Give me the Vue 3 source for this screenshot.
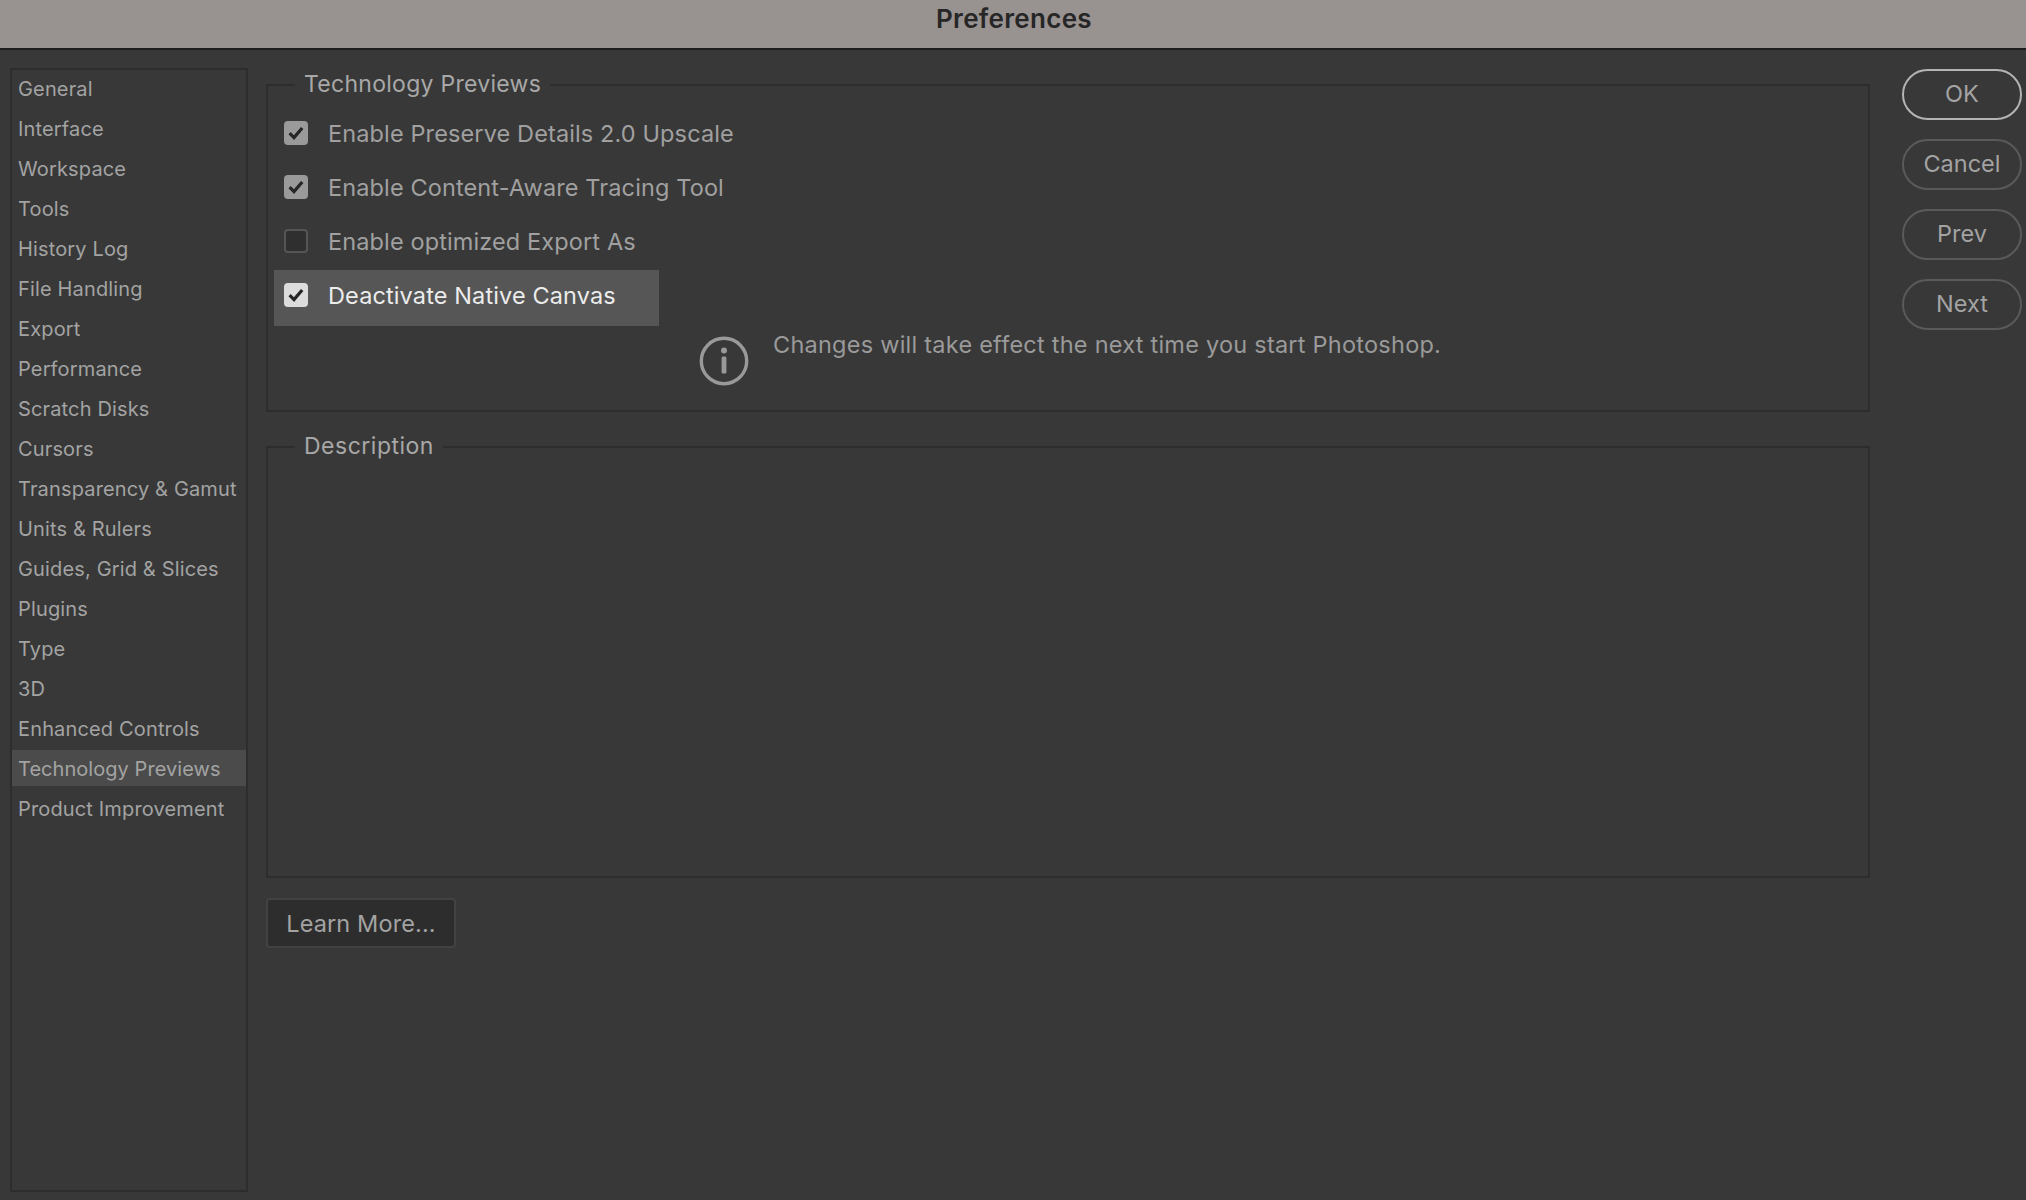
<script setup>
import { ref } from 'vue';

// 左侧分类列表
const sections = [
  'General', 'Interface', 'Workspace', 'Tools', 'History Log', 'File Handling',
  'Export', 'Performance', 'Scratch Disks', 'Cursors', 'Transparency & Gamut',
  'Units & Rulers', 'Guides, Grid & Slices', 'Plugins', 'Type', '3D',
  'Enhanced Controls', 'Technology Previews', 'Product Improvement'
];
const activeSection = ref('Technology Previews');

const previews = ref([
  { id: 1, label: 'Enable Preserve Details 2.0 Upscale', checked: true, hot: false },
  { id: 2, label: 'Enable Content-Aware Tracing Tool', checked: true, hot: false },
  { id: 3, label: 'Enable optimized Export As', checked: false, hot: false },
  { id: 4, label: 'Deactivate Native Canvas', checked: true, hot: true }
]);

const actions = ['OK', 'Cancel', 'Prev', 'Next'];
</script>

<template>
  <div class="dialog">
    <header class="titlebar">Preferences</header>
    <div class="body">
      <nav class="sidebar">
        <div
          v-for="s in sections"
          :key="s"
          class="nav-item"
          :class="{ active: s === activeSection }"
          @click="activeSection = s"
        >{{ s }}</div>
      </nav>

      <main class="content">
        <fieldset class="group previews">
          <legend>Technology Previews</legend>
          <div class="rows">
            <label
              v-for="p in previews"
              :key="p.id"
              class="row"
              :class="{ hot: p.hot }"
            >
              <input v-model="p.checked" type="checkbox" class="native">
              <span class="box" :class="{ on: p.checked }">
                <svg v-if="p.checked" width="18" height="16" viewBox="0 0 18 16">
                  <path d="M2.6 8.2 L7 12.6 L15.2 3" fill="none" stroke="#262626" stroke-width="3.2" />
                </svg>
              </span>
              <span class="row-text">{{ p.label }}</span>
            </label>
          </div>
          <div class="notice">
            <svg class="info" width="50" height="50" viewBox="0 0 50 50">
              <circle cx="25" cy="25" r="22.7" fill="none" stroke="#999" stroke-width="3.4" />
              <circle cx="25" cy="14.6" r="3" fill="#999" />
              <rect x="22.6" y="20.6" width="4.8" height="17" rx="1.4" fill="#999" />
            </svg>
            <span>Changes will take effect the next time you start Photoshop.</span>
          </div>
        </fieldset>

        <fieldset class="group description">
          <legend>Description</legend>
        </fieldset>

        <button class="learn" type="button">Learn More...</button>
      </main>

      <aside class="actions">
        <button
          v-for="(a, i) in actions"
          :key="a"
          class="pill"
          :class="{ primary: i === 0 }"
          type="button"
        >{{ a }}</button>
      </aside>
    </div>
  </div>
</template>

<style>
html, body {
  margin: 0;
  background: #383838;
}
</style>

<style scoped>
.dialog {
  width: 2026px;
  height: 1200px;
  overflow: hidden;
  display: flex;
  flex-direction: column;
  background: #383838;
  font-family: Inter, "Liberation Sans", sans-serif;
  color: #a3a3a3;
}

.titlebar {
  height: 50px;
  flex: none;
  box-sizing: border-box;
  border-bottom: 2px solid #1e1e1e;
  padding-left: 2px;
  background: #989291;
  color: #262626;
  font-size: 26px;
  font-weight: 600;
  letter-spacing: 0.3px;
  line-height: 38px;
  text-align: center;
}

.body {
  flex: 1;
  display: flex;
  min-height: 0;
  padding: 18px 4px 8px 10px;
}

.sidebar {
  width: 238px;
  flex: none;
  box-sizing: border-box;
  border: 2px solid #2d2d2d;
}

.nav-item {
  height: 40px;
  line-height: 38px;
  padding-left: 6px;
  font-size: 20px;
  letter-spacing: 0.15px;
  color: #a3a3a3;
  white-space: nowrap;
}

.nav-item.active {
  height: 36px;
  margin-bottom: 4px;
  background: #4b4b4b;
  letter-spacing: 0.05px;
}

.content {
  width: 1604px;
  flex: none;
  margin: 2px 0 0 18px;
  display: flex;
  flex-direction: column;
}

.group {
  margin: 0;
  padding: 0;
  min-width: 0;
  box-sizing: border-box;
  border: 2px solid #2d2d2d;
}

.group legend {
  margin-left: 27px;
  padding: 0 9px 2px;
  font-size: 23px;
  letter-spacing: 0.28px;
  line-height: 28px;
  color: #a8a8a8;
}

.previews {
  height: 342px;
}

.description {
  height: 446px;
  margin-top: 20px;
}

.description legend {
  letter-spacing: 0.5px;
}

.rows {
  display: flex;
  flex-direction: column;
  align-items: flex-start;
  padding: 8px 0 0 6px;
}

.row {
  width: 385px;
  height: 54px;
  box-sizing: border-box;
  display: flex;
  align-items: flex-start;
  padding: 13px 0 0 10px;
  font-size: 23.5px;
  letter-spacing: 0.12px;
  color: #a0a0a0;
  white-space: nowrap;
}

.row.hot {
  height: 56px;
  background: #565656;
  color: #ececec;
}

.native {
  display: none;
}

.box {
  width: 24px;
  height: 24px;
  flex: none;
  box-sizing: border-box;
  border: 2px solid #555;
  border-radius: 4px;
  background: #2f2f2f;
  display: flex;
  align-items: center;
  justify-content: center;
}

.box.on {
  border: none;
  background: #9a9a9a;
}

.row.hot .box.on {
  background: #dcdcdc;
}

.row-text {
  margin-left: 20px;
  line-height: 25px;
}

.notice {
  display: flex;
  align-items: flex-start;
  gap: 24px;
  margin-left: 431px;
  margin-top: 5px;
  font-size: 23.5px;
  letter-spacing: 0.24px;
  color: #9a9a9a;
}

.notice span {
  line-height: 28px;
}

.info {
  flex: none;
  margin-top: 5px;
}

.learn {
  align-self: flex-start;
  width: 190px;
  height: 50px;
  margin-top: 20px;
  padding: 0;
  box-sizing: border-box;
  border: 2px solid #424242;
  border-radius: 4px;
  background: #2d2d2d;
  font-family: inherit;
  font-size: 23.5px;
  letter-spacing: 0.12px;
  color: #a3a3a3;
}

.actions {
  width: 120px;
  flex: none;
  margin: 1px 0 0 32px;
  display: flex;
  flex-direction: column;
  gap: 19px;
}

.pill {
  height: 51px;
  padding: 0 0 2px;
  box-sizing: border-box;
  border: 2px solid #5a5a5a;
  border-radius: 26px;
  background: transparent;
  font-family: inherit;
  font-size: 23.5px;
  color: #a3a3a3;
}

.pill.primary {
  border-color: #b4b4b4;
}
</style>
